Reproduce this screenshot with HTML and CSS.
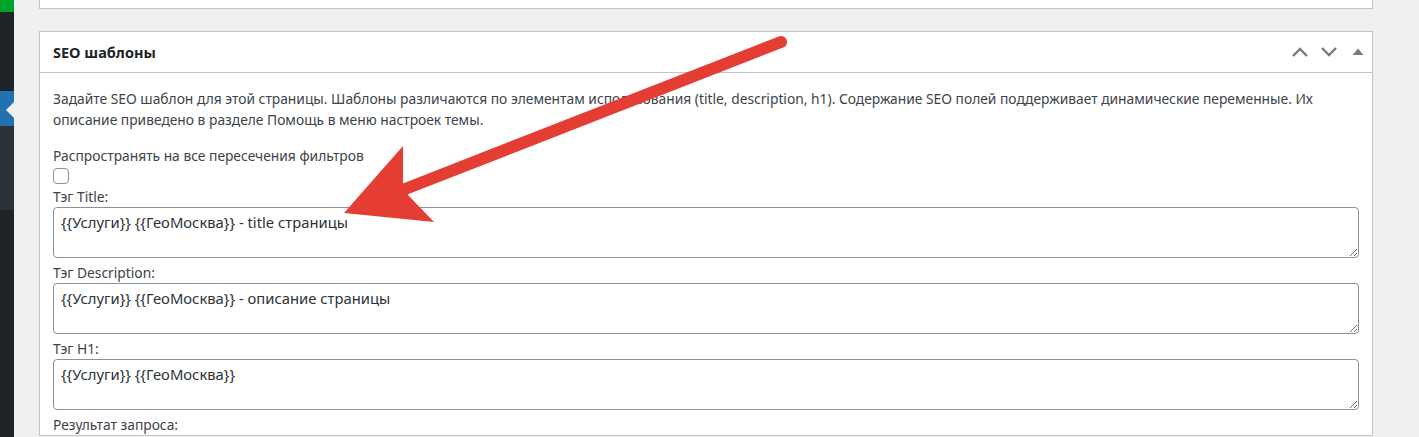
FILE: index.html
```html
<!DOCTYPE html>
<html lang="ru">
<head>
    <meta charset="UTF-8">
    <meta name="viewport" content="width=device-width, initial-scale=1.0">
    <title>SEO шаблоны</title>
    <link rel="stylesheet" href="styles.css">
</head>
<body>
    <div class="sidebar">
        <div class="menu-top"></div>
        <div class="menu-dark"></div>
        <div class="menu-current"><span class="notch"></span></div>
        <div class="menu-sub"></div>
        <div class="menu-rest"></div>
    </div>

    <div class="content">
        <div class="postbox postbox-prev"></div>

        <div class="postbox">
            <div class="postbox-header">
                <h2>SEO шаблоны</h2>
                <div class="handle-actions">
                    <button class="handle-btn" aria-label="Вверх">
                        <svg width="16" height="10" viewBox="0 0 16 10"><polyline points="1,9 8,2 15,9" fill="none" stroke="#787c82" stroke-width="2.4"/></svg>
                    </button>
                    <button class="handle-btn" aria-label="Вниз">
                        <svg width="16" height="10" viewBox="0 0 16 10"><polyline points="1,1 8,8 15,1" fill="none" stroke="#787c82" stroke-width="2.4"/></svg>
                    </button>
                    <button class="handle-btn" aria-label="Свернуть">
                        <svg width="12" height="8" viewBox="0 0 12 8"><polygon points="0.5,7 6,0.5 11.5,7" fill="#787c82"/></svg>
                    </button>
                </div>
            </div>

            <div class="inside">
                <p class="desc">Задайте SEO шаблон для этой страницы. Шаблоны различаются по элементам использования (title, description, h1). Содержание SEO полей поддерживает динамические переменные. Их описание приведено в разделе Помощь в меню настроек темы.</p>

                <label class="field-label" for="all-filters">Распространять на все пересечения фильтров</label>
                <input type="checkbox" id="all-filters" class="check">

                <label class="field-label" for="seo-title">Тэг Title:</label>
                <textarea id="seo-title" class="seo-field">{{Услуги}} {{ГеоМосква}} - title страницы</textarea>

                <label class="field-label" for="seo-desc">Тэг Description:</label>
                <textarea id="seo-desc" class="seo-field">{{Услуги}} {{ГеоМосква}} - описание страницы</textarea>

                <label class="field-label" for="seo-h1">Тэг H1:</label>
                <textarea id="seo-h1" class="seo-field">{{Услуги}} {{ГеоМосква}}</textarea>

                <label class="field-label">Результат запроса:</label>
            </div>
        </div>
    </div>

    <svg class="pointer" width="1419" height="437" viewBox="0 0 1419 437">
        <line x1="781" y1="42" x2="400" y2="191" stroke="#e43d33" stroke-width="12" stroke-linecap="round"/>
        <polygon points="344,213 403,146 403,183 408,195 434,222" fill="#e43d33"/>
    </svg>
</body>
</html>
```

FILE: styles.css
```css
body {
    margin: 0;
    height: 437px;
    overflow: hidden;
    display: flex;
    background: #f0f0f1;
    font-family: "Noto Sans", "Open Sans", sans-serif;
    font-size: 13.8px;
    color: #3c434a;
}

.sidebar {
    width: 14px;
    display: flex;
    flex-direction: column;
    flex-shrink: 0;
}

.menu-top {
    height: 12px;
    background: #00a32a;
}

.menu-dark {
    height: 79px;
    background: #1d2327;
}

.menu-current {
    height: 35px;
    background: #2271b1;
    position: relative;
}

.notch {
    position: absolute;
    right: 0;
    top: 11px;
    border: 8px solid transparent;
    border-right-color: #f0f0f1;
    border-left-width: 0;
}

.menu-sub {
    height: 84px;
    background: #2c3338;
}

.menu-rest {
    flex: 1;
    background: #1d2327;
}

.content {
    flex: 1;
    padding: 0 46px 0 25px;
}

.postbox {
    background: #fff;
    border: 1px solid #c3c4c7;
}

.postbox-prev {
    height: 8px;
    border-top: 0;
    margin-bottom: 22px;
}

.postbox-header {
    display: flex;
    align-items: center;
    justify-content: space-between;
    height: 40px;
    border-bottom: 1px solid #c3c4c7;
    padding-left: 13px;
}

.postbox-header h2 {
    margin: 0;
    font-size: 14.5px;
    font-weight: 700;
    color: #1d2327;
    line-height: 40px;
}

.handle-actions {
    display: flex;
    height: 100%;
}

.handle-btn {
    width: 29px;
    height: 100%;
    padding: 0;
    border: 0;
    background: none;
    display: flex;
    align-items: center;
    justify-content: center;
}

.inside {
    padding: 15px 13px 0;
}

.desc {
    margin: 0 0 16px;
    line-height: 21px;
}

.field-label {
    display: block;
    line-height: 20px;
}

.check {
    appearance: none;
    display: block;
    width: 16px;
    height: 16px;
    margin: 2px 0 3px;
    border: 1px solid #8c8f94;
    border-radius: 4px;
    background: #fff;
}

.seo-field {
    display: block;
    box-sizing: border-box;
    width: 100%;
    height: 51px;
    margin: 0 0 5px;
    padding: 4px 7px;
    border: 1px solid #8c8f94;
    border-radius: 4px;
    font-family: inherit;
    font-size: 14.8px;
    line-height: 20px;
    color: #2c3338;
    resize: vertical;
}

.pointer {
    position: absolute;
    left: 0;
    top: 0;
    pointer-events: none;
}
```
